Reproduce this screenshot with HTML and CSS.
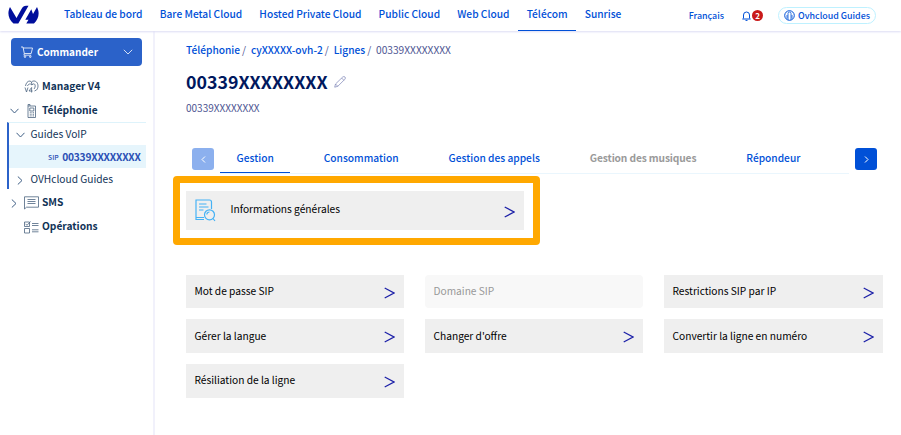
FILE: index.html
```html
<!DOCTYPE html>
<html lang="fr">
<head>
<meta charset="utf-8">
<title>OVHcloud - Téléphonie</title>
<link rel="stylesheet" href="styles.css">
</head>
<body>
<header class="topbar">
  <svg class="logo" viewBox="0 0 31 19" width="31" height="19"><path d="M2 2 L8.500 13 L13.500 4 Q15.300 .7 18 .7 H20.500 L10.300 18.600 H5.500 C.3 14 -1 8 2 2Z"/><path d="M29 2 C32 8 30.700 14 26 18.600 H18.300 L20.500 14.700 H17.300 L23.300 4.300 L25 9 Z"/></svg>
  <nav class="mainnav">
    <a>Tableau de bord</a><a>Bare Metal Cloud</a><a>Hosted Private Cloud</a><a>Public Cloud</a><a>Web Cloud</a><a class="on">Télécom</a><a>Sunrise</a>
  </nav>
  <div class="tools">
    <span class="lang">Français</span>
    <span class="bell"><svg width="9" height="10" viewBox="0 0 9 10"><path d="M1.500 7.500V4a3 3 0 0 1 6 0v3.500M.3 8h8.400M3.500 9.400h2"/></svg><b>2</b></span>
    <span class="account"><svg width="11" height="11" viewBox="0 0 11 11"><circle cx="5.500" cy="5.500" r="4.800"/><path d="M4 9.800V3.500a1.500 1.500 0 0 1 3 0v6.300M3 8.500V5M8 8.500V5" stroke-width=".8"/></svg>Ovhcloud Guides</span>
  </div>
</header>
<div class="layout">
  <aside class="sidebar">
    <button class="order"><svg width="12" height="12" viewBox="0 0 12 12"><path d="M0 1h2l1.300 6.500h6.900L11.500 2H2.200M3.300 7.500l-.4 1.700h7.300"/><circle cx="4" cy="10.700" r=".8"/><circle cx="9.300" cy="10.700" r=".8"/></svg><span>Commander</span><svg class="caret" width="10" height="6" viewBox="0 0 10 6"><path d="M.8.800 5 5 9.200.8"/></svg></button>
    <ul class="menu">
      <li class="row top"><i class="chev"></i><svg class="ic" width="15" height="14" viewBox="0 0 15 14"><path d="M1.500 6C2 3 3.500 1 6 1l1.500 1C9 .500 11 .700 12.500 2 14.500 4 14.500 8 12.500 10L10.500 11M3.500 6C4 4.500 5 3.800 6.500 4L8 5C9 3.500 10.500 3.500 11 4.800S11 8 10 9M7.500 2 8 5M1 7.500 2.500 12 4 7.500M7.600 12.500v-5L5 11h3.500"/></svg><b>Manager V4</b></li>
      <li class="row"><i class="chev"><svg width="9" height="6" viewBox="0 0 9 6"><path d="M.5.800 4.500 5 8.500.8"/></svg></i><svg class="ic" width="15" height="14" viewBox="0 0 15 14"><path d="M4 2V.5h2V2M4 2h7.500v11.500H4zM5.800 4h4v3h-4zM5.800 8.700h1M7.400 8.700h1M9 8.700h1M5.800 10.300h1M7.400 10.300h1M9 10.300h1M5.800 11.900h1M7.400 11.900h1M9 11.900h1"/></svg><b>Téléphonie</b></li>
      <li><ul class="sub">
        <li class="row"><i class="chev"><svg width="9" height="6" viewBox="0 0 9 6"><path d="M.5.800 4.500 5 8.500.8"/></svg></i>Guides VoIP</li>
        <li class="row line"><small>SIP</small><strong>00339XXXXXXXX</strong></li>
        <li class="row"><i class="chev"><svg width="6" height="9" viewBox="0 0 6 9"><path d="M.8.500 5 4.500.8 8.500"/></svg></i>OVHcloud Guides</li>
      </ul></li>
      <li class="row sms"><i class="chev"><svg width="6" height="9" viewBox="0 0 6 9"><path d="M.8.500 5 4.500.8 8.500"/></svg></i><svg class="ic" width="15" height="14" viewBox="0 0 15 14"><path d="M.5 13V.8h14v10.400h-12zM3.500 3.500h8M3.500 5.500h8M3.500 7.500h8"/></svg><b>SMS</b></li>
      <li class="row"><i class="chev"></i><svg class="ic" width="15" height="14" viewBox="0 0 15 14"><path d="M.5 2h5v4.500h-5zM.5 8.500h5V13h-5zM1.500 3.800 3 5.300 6.500 1.500M8 3.500h6.500M8 5.500h6.500M8 9.800h6.500M8 11.800h6.500"/></svg><b>Opérations</b></li>
    </ul>
  </aside>
  <main class="content">
    <div class="crumbs"><a>Téléphonie</a><i>/</i><a>cyXXXXX-ovh-2</a><i>/</i><a>Lignes</a><i>/</i><span>00339XXXXXXXX</span></div>
    <h1><span>00339XXXXXXXX</span><svg width="12" height="12" viewBox="0 0 12 12"><path d="M.7 11.200 1.500 8 8.600 1.100Q10 0 11 1T10.800 3.300L3.800 10.300ZM1.500 8l2.300 2.300M7.600 2l2.300 2.300"/></svg></h1>
    <p class="desc">00339XXXXXXXX</p>
    <div class="tabs">
      <button class="arrow off"><svg width="5" height="7" viewBox="0 0 5 7"><path d="M4 .5 1 3.500 4 6.500"/></svg></button>
      <div class="tablist"><a class="on">Gestion</a><a>Consommation</a><a>Gestion des appels</a><a class="dim">Gestion des musiques</a><a>Répondeur</a></div>
      <button class="arrow"><svg width="5" height="7" viewBox="0 0 5 7"><path d="M1 .5 4 3.500 1 6.500"/></svg></button>
    </div>
    <section class="highlight">
      <a class="tile info"><svg class="doc" width="21" height="24" viewBox="0 0 21 24"><path d="M9 20.500H1V1h13.500a2 2 0 0 1 2 2v7M4 5h7.500M4 8h9.500M4 11h4.500M1 18.500h8"/><circle cx="14.500" cy="15.800" r="5"/><path d="M18 19.500l2 2.500M11.800 15.500a2.700 2.700 0 0 1 2.700-2.500"/></svg><span>Informations générales</span><svg class="go" width="11" height="12" viewBox="0 0 11 12"><path d="M.7 1 10 6 .7 11"/></svg></a>
    </section>
    <section class="grid">
      <a class="tile"><span>Mot de passe SIP</span><svg class="go" width="11" height="12" viewBox="0 0 11 12"><path d="M.7 1 10 6 .7 11"/></svg></a>
      <a class="tile disabled"><span>Domaine SIP</span></a>
      <a class="tile"><span>Restrictions SIP par IP</span><svg class="go" width="11" height="12" viewBox="0 0 11 12"><path d="M.7 1 10 6 .7 11"/></svg></a>
      <a class="tile"><span>Gérer la langue</span><svg class="go" width="11" height="12" viewBox="0 0 11 12"><path d="M.7 1 10 6 .7 11"/></svg></a>
      <a class="tile"><span>Changer d'offre</span><svg class="go" width="11" height="12" viewBox="0 0 11 12"><path d="M.7 1 10 6 .7 11"/></svg></a>
      <a class="tile"><span>Convertir la ligne en numéro</span><svg class="go" width="11" height="12" viewBox="0 0 11 12"><path d="M.7 1 10 6 .7 11"/></svg></a>
      <a class="tile last"><span>Résiliation de la ligne</span><svg class="go" width="11" height="12" viewBox="0 0 11 12"><path d="M.7 1 10 6 .7 11"/></svg></a>
    </section>
  </main>
</div>
</body>
</html>
```
FILE: styles.css
```css
* { box-sizing: border-box; }
body { margin: 0; height: 435px; overflow: hidden; background: #fff; font: 10.200px/16px "Noto Sans CJK SC", "Open Sans", sans-serif; color: #113357; display: flex; flex-direction: column; }
svg { fill: none; stroke: currentColor; stroke-width: 1; flex: none; }
ul { list-style: none; margin: 0; padding: 0; }
i { font-style: normal; }
button { border: 0; font: inherit; padding: 0; }
.topbar { height: 31px; flex: none; display: flex; align-items: stretch; color: #0050d7; font-weight: 500; box-shadow: 0 1px 2px #dcdcf4; position: relative; }
.logo { margin: 5px 16.500px 0 8px; fill: #000e9c; stroke: none; }
.mainnav { display: flex; }
.mainnav a { padding: 6px 8.600px 0; white-space: nowrap; }
.mainnav .on { border-bottom: 1px solid #0050d7; }
.tools { margin-left: auto; display: flex; align-items: center; padding-right: 25px; font-size: 8.900px; line-height: 15px; }
.bell { display: flex; align-items: center; margin: 0 15px 0 18px; }
.bell svg { margin-right: 1px; }
.bell b { width: 11px; height: 11px; border-radius: 50%; background: #c91a1a; color: #fff; font-size: 8px; line-height: 11px; text-align: center; }
.account { display: flex; align-items: center; gap: 3px; border: 1px solid #bef1ff; border-radius: 9px; height: 17px; padding: 0 5px; }
.layout { flex: 1; display: flex; }
.sidebar { width: 155px; border-right: 2px solid #f1f1fb; flex: none; padding-top: 7px; }
.order { display: flex; align-items: center; width: 131px; height: 28px; margin-left: 11px; background: #2b62c9; color: #fff; border-radius: 4px; padding: 0 9px 0 10px; font-weight: 700; font-size: 10px; }
.order svg { stroke-width: .8; }
.order span { margin-left: 4px; flex: 1; text-align: left; }
.menu { margin-top: 8px; }
.row { display: flex; align-items: center; height: 24px; padding-left: 9px; }
.chev { width: 10px; display: flex; justify-content: center; }
.row .ic { margin: 2px 3px 0 5px; color: #4d6480; stroke-width: .8; }
.row svg { color: #3f5f85; }
.row .chev svg { margin-top: 2px; }
.sub { border-left: 2px solid #2b62c9; border-top: 1px solid #def3fb; margin: 0 7px 0 7px; height: 67px; }
.sub .row { height: 22px; padding-left: 6px; }
.sub .chev { margin-right: 5.500px; }
.sub .line { background: #e6f5fc; padding: 0 0 0 39px; color: #2b50b5; height: 23px; }
.line small { font-size: 6.800px; margin-right: 3.500px; font-weight: 500; }
.line strong { font-size: 10.200px; font-weight: 700; letter-spacing: -.2px; }
.sms { margin-top: 1px; }
.content { padding: 11px 0 0 31px; width: 746px; }
.crumbs { display: flex; color: #4d5592; height: 16px; }
.crumbs a { color: #0050d7; font-weight: 500; }
.crumbs i { margin: 0 4.800px 0 2px; }
h1 { display: flex; align-items: center; margin: 9px 0 0; height: 28px; font-size: 17.800px; line-height: 28px; color: #00185e; gap: 6px; }
h1 svg { color: #7a81b5; stroke-width: .7; margin-top: 2px; }
.desc { margin: 5px 0 0; color: #4d5592; font-size: 10px; }
.tabs { display: flex; margin: 32px 0 0 6px; align-items: flex-start; }
.arrow { width: 22px; height: 22px; border-radius: 3px; background: #0050d7; color: #fff; display: flex; align-items: center; justify-content: center; }
.arrow.off { background: #8cb0ee; }
.tablist { display: flex; width: 629px; margin: 0 6px; height: 26px; border-bottom: 1px solid #eaf6fd; color: #0050d7; font-weight: 500; }
.tablist a { padding: 2px 16.600px 0; margin-right: 16.800px; white-space: nowrap; }
.tablist .on { border-bottom: 1px solid #0050d7; height: 25px; }
.tablist .dim { color: #9a9a9a; font-weight: 700; letter-spacing: -.12px; }
.highlight { width: 367px; height: 69px; border: 7px solid #ffa800; border-radius: 4px; margin: 2px 0 0 -13px; padding: 8px 9px 0 6px; }
.tile { display: flex; align-items: center; justify-content: space-between; background: #efefef; color: #000; padding: 0 9px 0 8.500px; }
.go { color: #1c20a8; stroke-width: 1.300; margin-top: 2px; }
.info { height: 39px; padding-left: 9px; }
.info span { flex: 1; padding-left: 14.500px; margin-top: -3px; }
.doc { color: #45b2f5; stroke-width: 1.200; }
.grid { display: grid; grid-template-columns: 218px 218px 219px; gap: 11px 21px; grid-template-rows: 33px 34px 34px; margin-top: 30px; }
.grid span { margin-top: -1px; }
.grid .last span { margin-top: -3px; }
.disabled { background: #f8f8f8; color: #999; border-radius: 4px; }
```
